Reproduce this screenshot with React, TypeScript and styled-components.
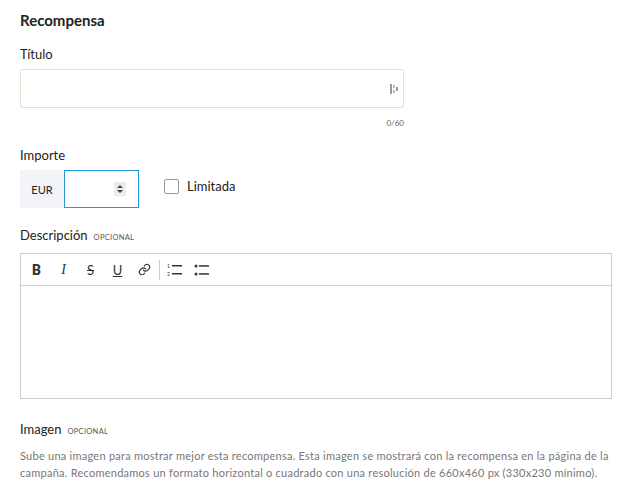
import React from "react";
import styled, { createGlobalStyle } from "styled-components";

const Global = createGlobalStyle`
  body { margin: 0; background: #fff; font-family: Lato, "Noto Sans", sans-serif; color: #222; }
`;
const Page = styled.div`padding: 10px 18px 0 20px; width: 591px;`;
const H = styled.h2`margin: 0 0 16px; font-size: 15px; font-weight: 700; line-height: 20px;`;
const Label = styled.div<{ $mt?: number }>`font-size: 13px; line-height: 16px; margin: ${p => p.$mt ?? 0}px 0 7px; display: flex; align-items: baseline; gap: 6px;`;
const Opt = styled.span`font-size: 7.5px; letter-spacing: 0.3px; color: #555; text-transform: uppercase;`;
const TitleBox = styled.div`width: 384px; height: 39px; border: 1px solid #e6e0cf; border-radius: 2px; display: flex; align-items: center; justify-content: flex-end; padding-right: 4px; box-sizing: border-box;`;
const Counter = styled.div`width: 384px; text-align: right; font-size: 8px; color: #666; margin-top: 10px;`;
const Row = styled.div`display: flex; align-items: flex-start;`;
const Eur = styled.div`width: 44px; height: 38px; background: #f3f4f7; font-size: 11px; display: flex; align-items: center; justify-content: center;`;
const Num = styled.div`width: 75px; height: 38px; border: 1px solid #1b9ad6; box-sizing: border-box; display: flex; align-items: center; justify-content: flex-end; padding-right: 12px;`;
const Spin = styled.div`width: 12px; height: 14px; background: #ececec; display: flex; align-items: center; justify-content: center;`;
const Check = styled.label`display: flex; align-items: center; gap: 8px; margin: 8px 0 0 25px; font-size: 13px;`;
const Box = styled.span`width: 13px; height: 13px; border: 1px solid #999; border-radius: 2px;`;
const Editor = styled.div`width: 592px; border: 1px solid #ccc; box-sizing: border-box;`;
const Toolbar = styled.div`height: 31px; border-bottom: 1px solid #ccc; display: flex; align-items: center; padding-left: 2px;`;
const Btn = styled.span`width: 27px; height: 20px; display: flex; align-items: center; justify-content: center; font-size: 14px; color: #333;`;
const Sep = styled.span`width: 1px; height: 20px; background: #ccc; margin: 0 1px 0 1px;`;
const Body = styled.div`height: 112px;`;
const Para = styled.p`margin: 0; font-size: 11px; letter-spacing: 0.25px; line-height: 17px; color: #777; width: 590px;`;

export default function App() {
  return (
    <Page>
      <Global />
      <H>Recompensa</H>
      <Label>Título</Label>
      <TitleBox>
        <svg width="10" height="12" viewBox="0 0 10 12"><rect x="1" y="1" width="2" height="10" fill="#999"/><rect x="4" y="2" width="2" height="3" fill="#bbb"/><rect x="4" y="7" width="2" height="3" fill="#bbb"/><rect x="7" y="4" width="2" height="4" fill="#999"/></svg>
      </TitleBox>
      <Counter>0/60</Counter>
      <Label $mt={19}>Importe</Label>
      <Row>
        <Eur>EUR</Eur>
        <Num><Spin><svg width="8" height="10" viewBox="0 0 8 10"><path d="M1 4L4 1L7 4Z M1 6L4 9L7 6Z" fill="#444"/></svg></Spin></Num>
        <Check><Box />Limitada</Check>
      </Row>
      <Label $mt={19}>Descripción <Opt>Opcional</Opt></Label>
      <Editor>
        <Toolbar>
          <Btn style={{ fontWeight: 800, fontFamily: "Roboto, sans-serif" }}>B</Btn>
          <Btn style={{ fontStyle: "italic", fontFamily: "'Liberation Serif', serif" }}>I</Btn>
          <Btn style={{ textDecoration: "line-through", fontSize: 13 }}>S</Btn>
          <Btn style={{ textDecoration: "underline", fontSize: 13 }}>U</Btn>
          <Btn>
            <svg width="13" height="13" viewBox="0 0 24 24" fill="none" stroke="#333" strokeWidth="2.2" strokeLinecap="round"><path d="M10 13a5 5 0 0 0 7.5.5l3-3a5 5 0 0 0-7-7l-1.7 1.7"/><path d="M14 11a5 5 0 0 0-7.5-.5l-3 3a5 5 0 0 0 7 7l1.7-1.7"/></svg>
          </Btn>
          <Sep />
          <Btn>
            <svg width="16" height="14" viewBox="0 0 16 14"><text x="0" y="5" fontSize="5" fill="#333">1</text><text x="0" y="13" fontSize="5" fill="#333">2</text><rect x="5" y="2" width="10" height="1.5" fill="#333"/><rect x="5" y="10" width="10" height="1.5" fill="#333"/></svg>
          </Btn>
          <Btn>
            <svg width="16" height="14" viewBox="0 0 16 14"><circle cx="2" cy="3" r="1.5" fill="#333"/><circle cx="2" cy="11" r="1.5" fill="#333"/><rect x="5" y="2.2" width="10" height="1.5" fill="#333"/><rect x="5" y="10.2" width="10" height="1.5" fill="#333"/></svg>
          </Btn>
        </Toolbar>
        <Body />
      </Editor>
      <Label $mt={22}>Imagen <Opt>Opcional</Opt></Label>
      <Para>Sube una imagen para mostrar mejor esta recompensa. Esta imagen se mostrará con la recompensa en la página de la campaña. Recomendamos un formato horizontal o cuadrado con una resolución de 660x460 px (330x230 mínimo).</Para>
    </Page>
  );
}
